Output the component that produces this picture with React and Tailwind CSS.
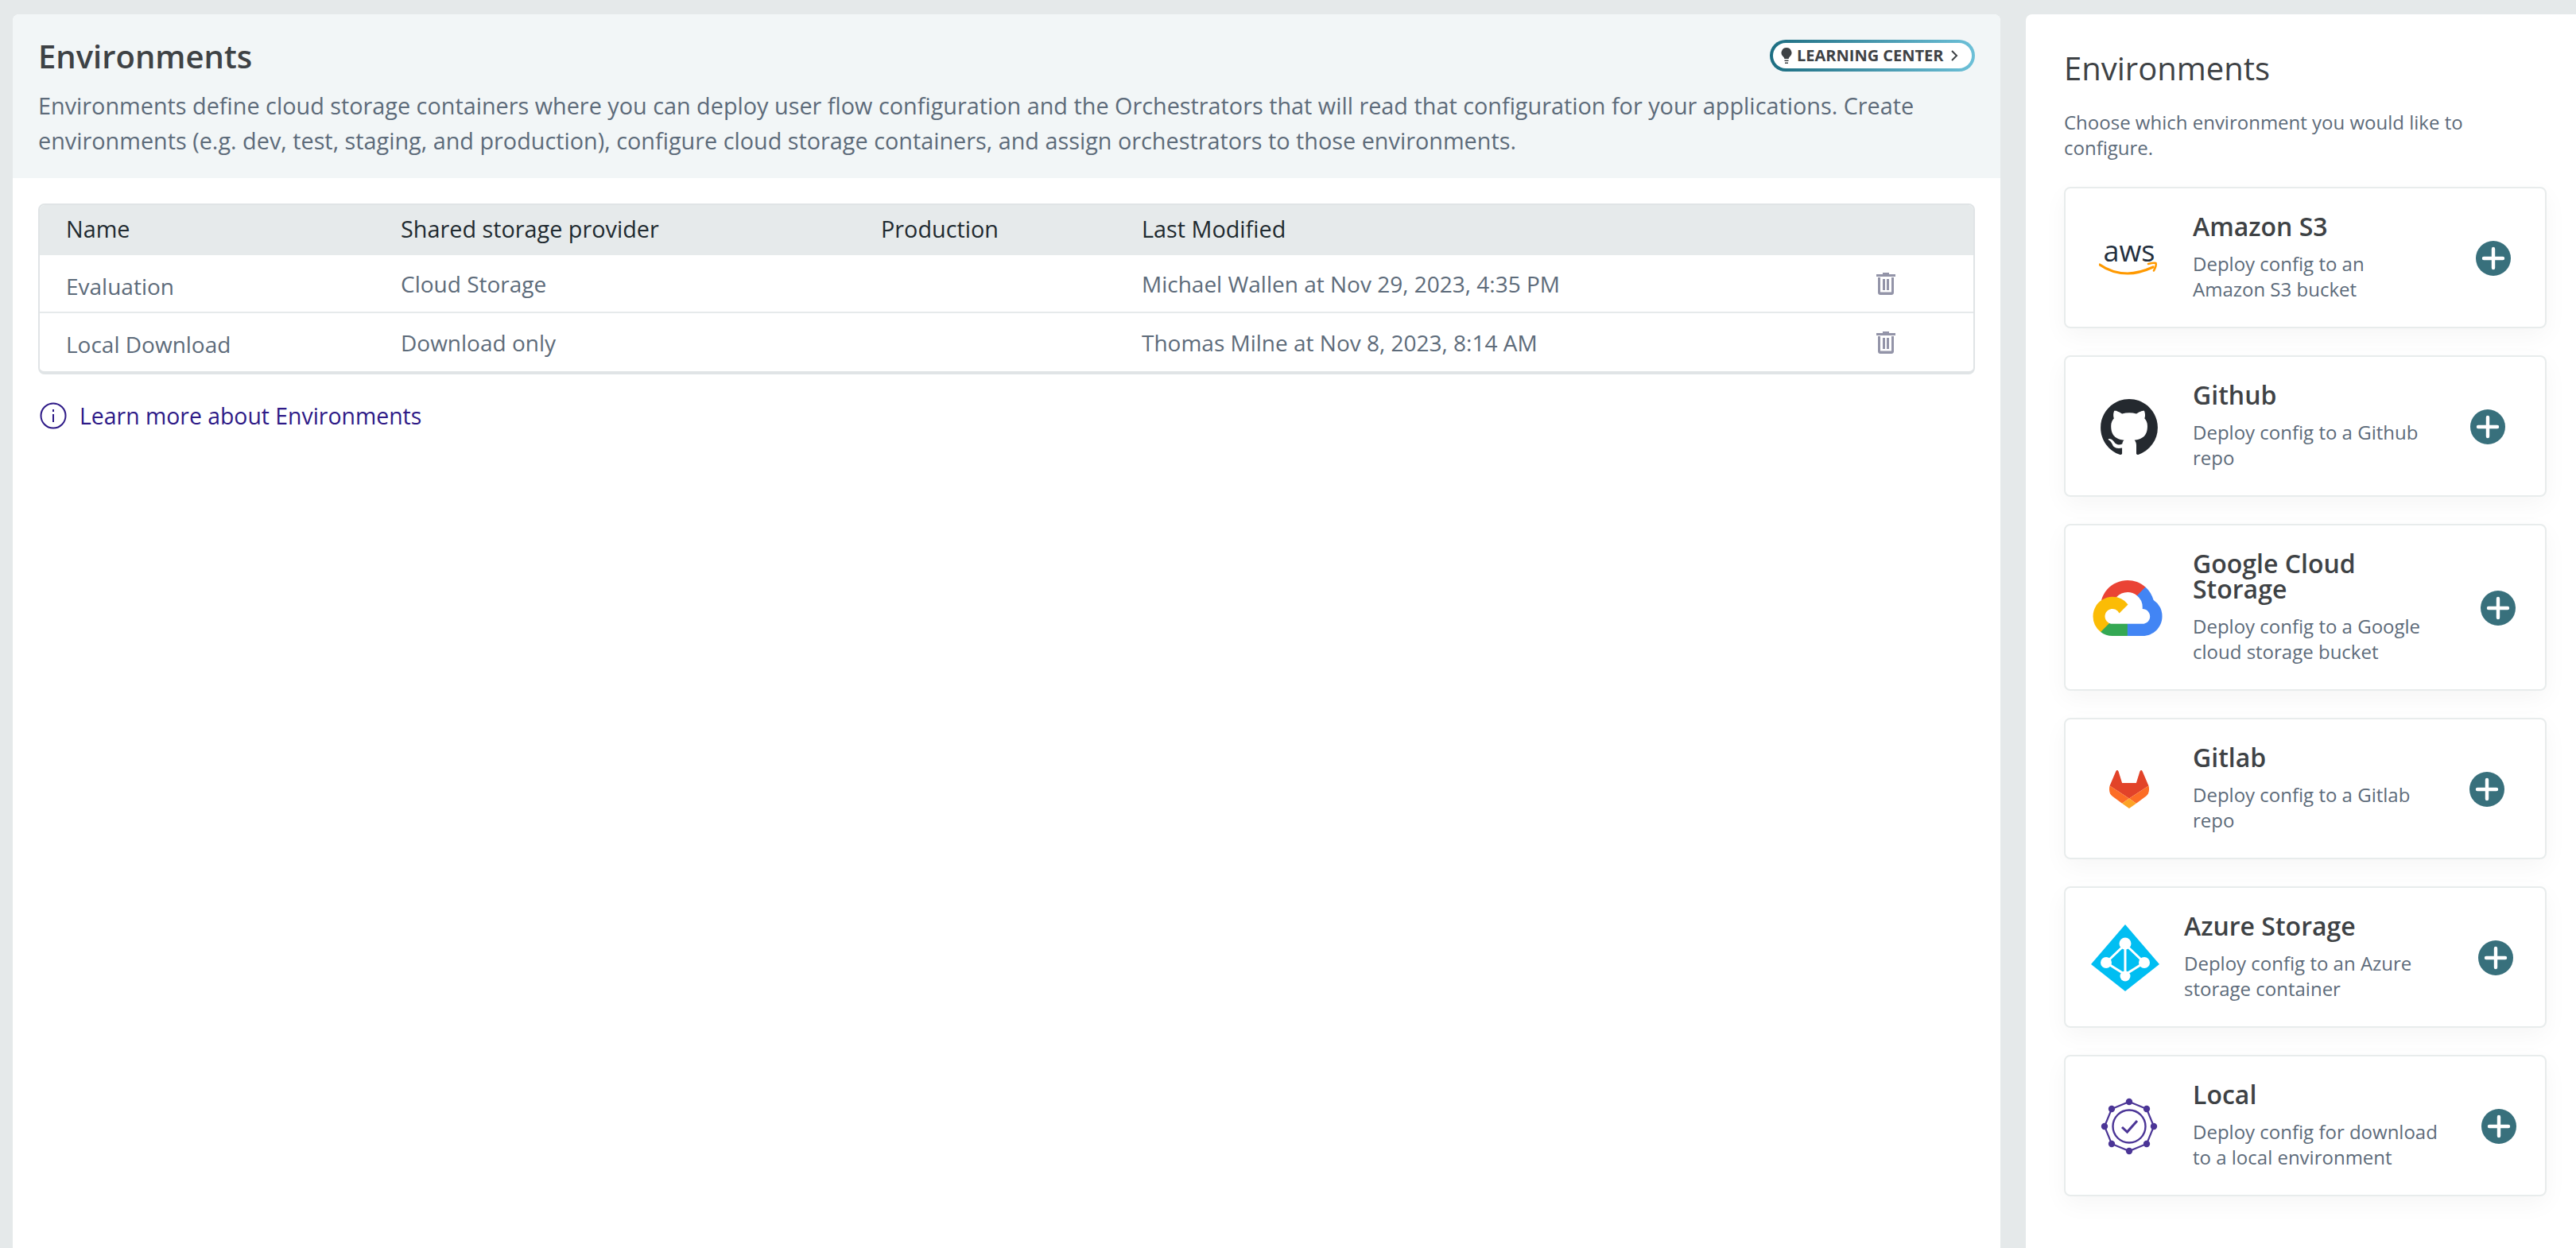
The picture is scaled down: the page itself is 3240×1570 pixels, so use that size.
import React from "react";

const AwsLogo = () => (
  <svg width="76" height="46" viewBox="0 0 76 46">
    <text x="38" y="27" textAnchor="middle" fontFamily="Open Sans, sans-serif" fontSize="36" fill="#232f3e">aws</text>
    <path d="M1 31c10 7 22 11 35 11 10 0 21-3 32-8" fill="none" stroke="#ff9900" strokeWidth="3.2" strokeLinecap="round" />
    <path d="M62 30c4-1 8-1.500 9.500-1 .8 2-.6 6-2.500 9.500" fill="none" stroke="#ff9900" strokeWidth="2.600" strokeLinecap="round" strokeLinejoin="round" />
  </svg>
);

const GithubLogo = () => (
  <svg width="72" height="70" viewBox="0 0 16 15.600" fill="#24292f">
    <path d="M8 0C3.580 0 0 3.580 0 8c0 3.540 2.290 6.530 5.470 7.590.4.070.55-.17.55-.38 0-.19-.01-.82-.01-1.490-2.010.37-2.530-.49-2.690-.94-.09-.23-.48-.94-.82-1.130-.28-.15-.68-.52-.01-.53.63-.01 1.080.58 1.230.82.72 1.210 1.870.87 2.330.66.07-.52.28-.87.51-1.070-1.780-.2-3.640-.89-3.640-3.950 0-.87.31-1.590.82-2.150-.08-.2-.36-1.020.08-2.120 0 0 .67-.21 2.200.82.64-.18 1.320-.27 2-.27.68 0 1.360.09 2 .27 1.530-1.040 2.200-.82 2.200-.82.44 1.100.16 1.920.08 2.120.51.56.82 1.270.82 2.150 0 3.070-1.870 3.750-3.650 3.950.29.25.54.73.54 1.480 0 1.070-.01 1.930-.01 2.200 0 .21.15.46.55.38A8.013 8.013 0 0016 8c0-4.420-3.580-8-8-8z" />
  </svg>
);

const GoogleLogo = () => (
  <svg width="88" height="70" viewBox="0 0 256 206" className="-ml-1">
    <path fill="#ea4335" d="M170.252 56.819l22.253-22.253 1.483-9.370C153.437-11.677 88.976-7.496 52.420 33.920 42.267 45.423 34.734 59.764 30.717 74.573l7.970-1.123 44.505-7.340 3.436-3.513c19.797-21.742 53.270-24.667 76.128-6.168l7.496.390z" />
    <path fill="#4285f4" d="M224.205 73.918c-5.115-18.836-15.616-35.769-30.217-48.722l-31.232 31.232a55.515 55.515 0 0 1 20.379 44.037v5.544c15.350 0 27.797 12.445 27.797 27.796 0 15.352-12.446 27.485-27.797 27.485h-55.671l-5.466 5.934v33.340l5.466 5.231h55.670c39.930.311 72.553-31.494 72.864-71.424a72.303 72.303 0 0 0-31.493-60.453z" />
    <path fill="#34a853" d="M71.870 205.796h55.593V161.290H71.870a27.275 27.275 0 0 1-11.399-2.498l-7.887 2.420-22.409 22.253-1.952 7.574c12.567 9.489 27.900 14.825 43.647 14.757z" />
    <path fill="#fbbc05" d="M71.870 61.425C31.940 61.664-.237 94.228.001 134.159a72.301 72.301 0 0 0 28.222 56.880l32.248-32.246c-13.990-6.322-20.208-22.786-13.887-36.776 6.320-13.990 22.786-20.208 36.775-13.888a27.796 27.796 0 0 1 13.887 13.888l32.248-32.248A72.224 72.224 0 0 0 71.870 61.425z" />
  </svg>
);

const GitlabLogo = () => (
  <svg width="50" height="48" viewBox="0 0 112 108">
    <path fill="#e24329" d="M22 0c2 0 3 1 4 4l10 32h40L86 4c1-3 2-4 4-4s3 1 4 4l17 40-55 36L1 44 18 4c1-3 2-4 4-4z" />
    <path fill="#fc6d26" d="M1 44l55 36-20 14L8 73C0 67-2 54 1 44z" />
    <path fill="#fc6d26" d="M111 44L56 80l20 14 28-21c8-6 10-19 7-29z" />
    <path fill="#fca326" d="M36 94l20-14 20 14-20 14z" />
  </svg>
);

const AzureLogo = () => (
  <svg width="86" height="84" viewBox="0 0 86 84">
    <path fill="#00bef2" d="M43 0l43 50-43 34L0 50z" />
    <path d="M43 25L19 48l24 15 24-15zM43 25v38" fill="none" stroke="#fff" strokeWidth="3" />
    <circle cx="43" cy="24" r="7.500" fill="#fff" />
    <circle cx="19" cy="48" r="7" fill="#fff" />
    <circle cx="67" cy="48" r="7" fill="#fff" />
    <circle cx="43" cy="65" r="6.500" fill="#fff" />
  </svg>
);

const LocalLogo = () => {
  const pts = [[36, 5], [58, 14], [67, 36], [58, 58], [36, 67], [14, 58], [5, 36], [14, 14]];
  return (
    <svg width="72" height="72" viewBox="0 0 72 72">
      <polygon points={pts.map((p) => p.join(",")).join(" ")} fill="none" stroke="#4b3596" strokeWidth="2.200" />
      {pts.map((p) => (
        <circle key={p.join("-")} cx={p[0]} cy={p[1]} r="4.200" fill="#4b3596" />
      ))}
      <circle cx="36" cy="36" r="20.500" fill="none" stroke="#4b3596" strokeWidth="2.400" />
      <path d="M27 37l6.500 6L46 29" fill="none" stroke="#4b3596" strokeWidth="3" />
    </svg>
  );
};

const PlusCircle = () => (
  <svg width="44" height="44" viewBox="0 0 44 44" className="shrink-0 ml-px">
    <circle cx="22" cy="22" r="22" fill="#38707c" />
    <path d="M22 10v24M10 22h24" stroke="#fff" strokeWidth="4.400" strokeLinecap="round" />
  </svg>
);

const TrashIcon = () => (
  <svg width="24" height="28" viewBox="0 0 24 28" fill="#9394a8">
    <path d="M8 0h8v2h8v3H0V2h8z" />
    <path d="M2 6h3v18.500h14V6h3v19c0 1.700-1.300 3-3 3H5c-1.700 0-3-1.300-3-3z" />
    <rect x="8" y="8" width="3" height="14" />
    <rect x="13" y="8" width="3" height="14" />
  </svg>
);

const cards = [
  { title: ["Amazon S3"], desc: ["Deploy config to an", "Amazon S3 bucket"], logo: <AwsLogo />, box: "w-[160px]", text: "w-[355px]" },
  { title: ["Github"], desc: ["Deploy config to a Github", "repo"], logo: <GithubLogo />, box: "w-[160px]", text: "w-[348px]" },
  { title: ["Google Cloud", "Storage"], desc: ["Deploy config to a Google", "cloud storage bucket"], logo: <GoogleLogo />, box: "w-[160px]", text: "w-[361px]" },
  { title: ["Gitlab"], desc: ["Deploy config to a Gitlab", "repo"], logo: <GitlabLogo />, box: "w-[160px]", text: "w-[347px]" },
  { title: ["Azure Storage"], desc: ["Deploy config to an Azure", "storage container"], logo: <AzureLogo />, box: "w-[149px]", text: "w-[369px]" },
  { title: ["Local"], desc: ["Deploy config for download", "to a local environment"], logo: <LocalLogo />, box: "w-[160px]", text: "w-[362px]" },
];

const rows = [
  { name: "Evaluation", provider: "Cloud Storage", modified: "Michael Wallen at Nov 29, 2023, 4:35 PM" },
  { name: "Local Download", provider: "Download only", modified: "Thomas Milne at Nov 8, 2023, 8:14 AM" },
];

const cols = "grid grid-cols-[421px_604px_328px_886px_1fr] items-center pl-[33px]";

const ProviderCard = ({ card }) => (
  <div className="flex items-center border-2 border-[#e8ecec] rounded-lg bg-white pt-[32px] pb-[31px] shadow-[0_10px_30px_rgba(0,0,0,0.04)]">
    <div className={`${card.box} flex justify-center shrink-0`}>{card.logo}</div>
    <div className={`${card.text} shrink-0 whitespace-nowrap`}>
      <div className="text-[32px] leading-[32px] font-semibold text-[#3e4245] mb-[15px]">
        {card.title.map((t) => (
          <div key={t}>{t}</div>
        ))}
      </div>
      <div className="text-[24px] leading-[32px] text-[#5d6b7a]">
        {card.desc.map((d) => (
          <div key={d}>{d}</div>
        ))}
      </div>
    </div>
    <PlusCircle />
  </div>
);

export default function App() {
  return (
    <div className="h-[1570px] w-[3240px] overflow-hidden bg-[#e5e9ea] pt-[18px] pl-4 flex gap-8 font-['Open_Sans',sans-serif]">
      <main className="w-[2500px] h-full bg-white rounded-t-lg">
        <header className="bg-[#f2f6f7] rounded-t-lg h-[206px] pl-8 pr-[38px] pt-[26px]">
          <div className="flex items-start justify-between mr-[-6px]">
            <h1 className="text-[40px] leading-[54px] font-semibold text-[#3e4245]">Environments</h1>
            <a className="block mt-[6px] rounded-full p-[4px] bg-linear-to-r from-[#1c6e82] to-[#6cc0d8]">
              <span className="flex items-center h-[32px] w-[250px] bg-white rounded-full pl-[10px] text-[#3e4245] text-[20px] font-bold whitespace-nowrap">
                <svg width="14" height="24" viewBox="0 0 14 24" fill="#3e4245" className="mr-[6px] shrink-0">
                  <path d="M7 2a6.500 6.500 0 0 0-4 11.600c.8.800 1.300 1.500 1.300 2.400h5.400c0-.9.500-1.600 1.300-2.400A6.500 6.500 0 0 0 7 2z" />
                  <path d="M4.500 17.500h5v1.500h-5zM5 20.500h4V22H5z" />
                </svg>
                LEARNING CENTER
                <svg width="10" height="16" viewBox="0 0 10 16" fill="none" stroke="#3e4245" strokeWidth="2" className="ml-[8px]">
                  <path d="M2 2l6 6-6 6" />
                </svg>
              </span>
            </a>
          </div>
          <p className="mt-[13px] text-[28.8px] leading-[44px] text-[#5d6b7a]">
            Environments define cloud storage containers where you can deploy user flow configuration and the Orchestrators that will read that configuration for your applications. Create environments (e.g. dev, test, staging, and production), configure cloud storage containers, and assign orchestrators to those environments.
          </p>
        </header>

        <section className="px-8 pt-8">
          <div className="border-2 border-b-4 border-[#e0e4e6] rounded-lg overflow-hidden text-[28px]">
            <div className={`${cols} h-[63px] pb-[4px] bg-[#e6eaeb] text-[#1f2a30] text-[28.8px]`}>
              <div>Name</div>
              <div>Shared storage provider</div>
              <div>Production</div>
              <div>Last Modified</div>
            </div>
            {rows.map((row, i) => (
              <div key={row.name} className={`${cols} h-[73px] text-[#5d6b7a] ${i === 0 ? "border-b-2 border-[#e6eaeb]" : ""}`}>
                <div className={i === 0 ? "pt-[6px]" : "pt-[4px]"}>{row.name}</div>
                <div>{row.provider}</div>
                <div></div>
                <div>{row.modified}</div>
                <div className="ml-[38px]"><TrashIcon /></div>
              </div>
            ))}
          </div>

          <a className="flex items-center gap-[16px] mt-[33px] pl-[2px] text-[28.4px] leading-[38px] text-[#2e1a87]">
            <svg width="34" height="34" viewBox="0 0 34 34" fill="none" stroke="#2e1a87" strokeWidth="2" className="shrink-0">
              <circle cx="17" cy="17" r="15.500" />
              <path d="M17 15v10M17 9v3" />
            </svg>
            Learn more about Environments
          </a>
        </section>
      </main>

      <aside className="flex-1 h-full bg-white rounded-tl-lg pl-[48px] pr-[37px] pt-[48px]">
        <h2 className="text-[40px] leading-[40px] text-[#3e4245]">Environments</h2>
        <p className="mt-[32px] text-[24px] leading-[32px] text-[#5d6b7a]">
          Choose which environment you would like to<br />configure.
        </p>
        <div className="mt-[33px] flex flex-col gap-[34px]">
          {cards.map((card) => (
            <ProviderCard key={card.title[0]} card={card} />
          ))}
        </div>
      </aside>
    </div>
  );
}
